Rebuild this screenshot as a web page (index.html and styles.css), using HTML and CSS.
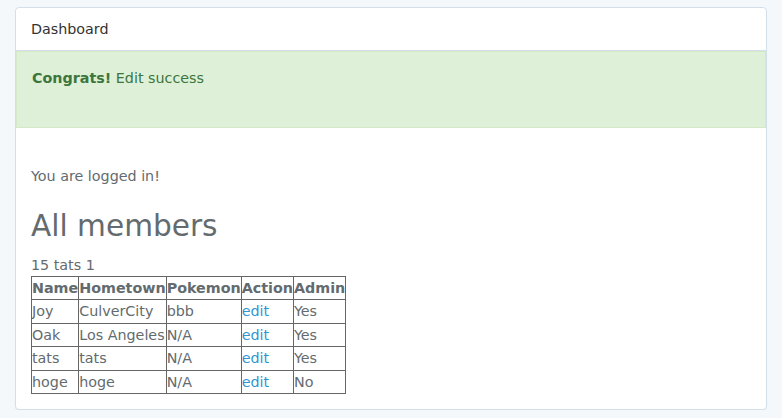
FILE: index.html
```html
<!DOCTYPE html>
<html>
<head>
<meta charset="utf-8">
<link rel="stylesheet" href="styles.css">
</head>
<body>
<div class="container">
  <div class="panel">
    <div class="panel-heading">Dashboard</div>
    <div class="alert"><strong>Congrats!</strong> Edit success<br><br></div>
    <div class="panel-body">
      <p class="logged">You are logged in!</p>
      <h2 class="title">All members</h2>
      <div class="count">15 tats 1</div>
      <table class="members">
        <tr><th>Name</th><th>Hometown</th><th>Pokemon</th><th>Action</th><th>Admin</th></tr>
        <tr><td>Joy</td><td>CulverCity</td><td>bbb</td><td><a href="#">edit</a></td><td>Yes</td></tr>
        <tr><td>Oak</td><td>Los Angeles</td><td>N/A</td><td><a href="#">edit</a></td><td>Yes</td></tr>
        <tr><td>tats</td><td>tats</td><td>N/A</td><td><a href="#">edit</a></td><td>Yes</td></tr>
        <tr><td>hoge</td><td>hoge</td><td>N/A</td><td><a href="#">edit</a></td><td>No</td></tr>
      </table>
    </div>
  </div>
</div>
</body>
</html>
```
FILE: styles.css
```css
html, body {
  margin: 0;
  padding: 0;
}
body {
  background: #f5f8fa;
  font-family: "DejaVu Sans", Verdana, sans-serif;
  font-size: 14.3px;
  line-height: 22.4px;
  color: #636b6f;
}
.container {
  padding: 7px 15px 0 15px;
}
.panel {
  background: #fff;
  border: 1px solid #d3e0e9;
  border-radius: 4px;
  box-shadow: 0 1px 1px rgba(0,0,0,0.05);
}
.panel-heading {
  padding: 10px 15px;
  color: #333;
  border-bottom: 1px solid #d3e0e9;
  border-radius: 3px 3px 0 0;
}
.alert {
  padding: 15px;
  background: #dff0d8;
  border: 1px solid #d6e9c6;
  color: #3c763d;
  margin-bottom: 22px;
}
.alert strong {
  font-weight: bold;
}
.panel-body {
  padding: 15px;
}
.logged {
  margin: 0;
}
.title {
  font-size: 29.6px;
  font-weight: 500;
  line-height: 33px;
  margin: 22px 0 11px 0;
}
.members {
  border-collapse: collapse;
  border: 1px solid #666;
}
.members th, .members td {
  border: 1px solid #666;
  padding: 0;
  text-align: left;
}
.members th {
  font-weight: bold;
}
.members a {
  color: #3097d1;
  text-decoration: none;
}
```
